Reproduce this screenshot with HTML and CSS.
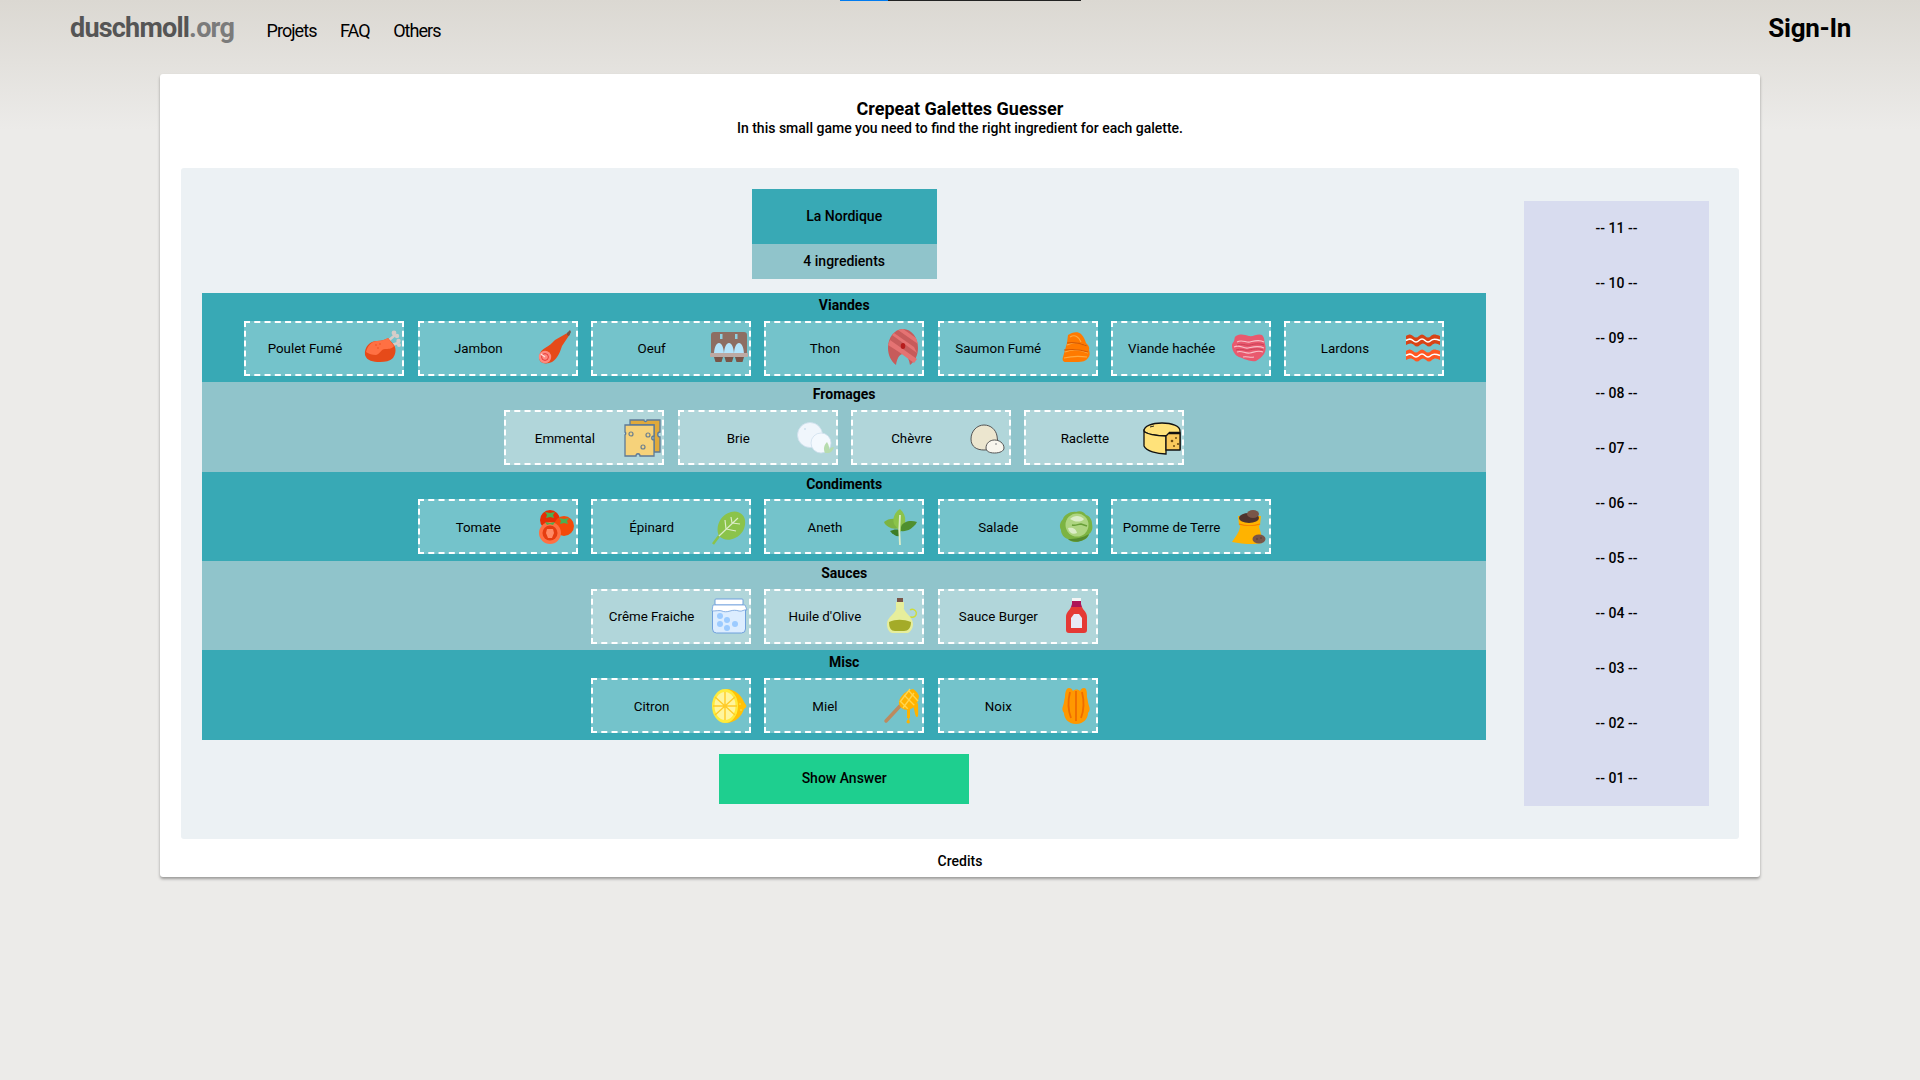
FILE: index.html
```html
<!DOCTYPE html>
<html lang="fr">
<head>
    <meta charset="UTF-8">
    <meta name="viewport" content="width=device-width, initial-scale=1.0">
    <title>Crepeat Galettes Guesser</title>
    <link rel="stylesheet" href="styles.css">
</head>
<body>

<div class="progress"><span class="progress-blue"></span><span class="progress-dark"></span></div>

<header class="topbar">
    <a class="logo" href="#">duschmoll<span>.org</span></a>
    <nav class="nav">
        <a href="#">Projets</a>
        <a href="#">FAQ</a>
        <a href="#">Others</a>
    </nav>
    <a class="signin" href="#">Sign-In</a>
</header>

<main class="card">
    <h1>Crepeat Galettes Guesser</h1>
    <p class="intro">In this small game you need to find the right ingredient for each galette.</p>

    <div class="panel">
        <div class="game">
            <div class="galette">
                <div class="galette-name">La Nordique</div>
                <div class="galette-count">4 ingredients</div>
            </div>

            <section class="group">
                <h2>Viandes</h2>
                <div class="items">
                    <div class="item"><span>Poulet Fumé</span>
                        <svg viewBox="0 0 40 40"><path d="M25 14l8-7M27 18l9-3" stroke="#d7ccc8" stroke-width="2.5"/><circle cx="32" cy="5" r="2.4" fill="#d7ccc8"/><circle cx="35" cy="8" r="2.200" fill="#d7ccc8"/><circle cx="36.500" cy="13" r="2.200" fill="#d7ccc8"/><circle cx="37" cy="17" r="2" fill="#d7ccc8"/><path d="M3 27c-1-8 5-14 12-14 4 0 8-1 11-3l6 7c3 5 1 10-1 13-3 3-8 4-13 4-7 0-13-1-15-7z" fill="#e64a19"/><path d="M4 24c2-7 6-11 11-11 4 0 8-1 11-3l6 8c-2 3-6 3-9 3-4 0-5 5-9 6-4 0-7-1-10-3z" fill="#ff7043"/><circle cx="14" cy="17" r=".7" fill="#e64a19"/><circle cx="18" cy="16" r=".7" fill="#e64a19"/><circle cx="16" cy="20" r=".7" fill="#e64a19"/></svg>
                    </div>
                    <div class="item"><span>Jambon</span>
                        <svg viewBox="0 0 40 40"><path d="M4 33c-2-5 0-10 5-13 4-2 7-5 10-8L33 4l1 2-8 12c-2 6-4 12-10 16-4 2-10 2-12-1z" fill="#e64a19"/><path d="M31 5l3-3 1 2-2 4-2-1z" fill="#795548"/><circle cx="9" cy="29" r="6.200" fill="#ff8a80"/><circle cx="9" cy="29" r="3.400" fill="none" stroke="#e53935" stroke-width="1"/><path d="M9 29l-4-3" stroke="#ffe0dc" stroke-width="1.200"/></svg>
                    </div>
                    <div class="item"><span>Oeuf</span>
                        <svg viewBox="0 0 40 40"><rect x="2" y="4" width="36" height="23" rx="3" fill="#8d6e63"/><rect x="11" y="6" width="2.500" height="5" fill="#90cfe0"/><rect x="26" y="6" width="2.500" height="5" fill="#90cfe0"/><path d="M5 27c0-7 2-12 5-12s5 5 5 12zM15 27c0-7 2-12 5-12s5 5 5 12zM25 27c0-7 2-12 5-12s5 5 5 12z" fill="#b3e5fc"/><rect x="1" y="25" width="38" height="4" rx="1" fill="#bcaaa4"/><path d="M5 29h9l-1.500 5h-6zM15.500 29h9l-1.500 5h-6zM26 29h9l-1.500 5h-6z" fill="#795548"/></svg>
                    </div>
                    <div class="item"><span>Thon</span>
                        <svg viewBox="0 0 40 40"><path d="M21 1C30 1 36 10 36 20c0 7-3 13-8 17-1-6-3-11-7-11s-6 5-7 11C9 33 6 27 6 20 6 10 12 1 21 1z" fill="#c75b5b"/><path d="M12 5l20 14 3 6-25-18zM8 12l27 19-3 4L17 24 6 17zM21 1l13 9 2 6L16 2z" fill="#e57373"/><ellipse cx="21" cy="18" rx="2.300" ry="3" fill="#b71c1c"/></svg>
                    </div>
                    <div class="item"><span>Saumon Fumé</span>
                        <svg viewBox="0 0 40 40"><path d="M12 7c4-3 10-4 13-1 3 3 4 6 5 9 2 2 4 4 3 7 1 3 1 6-1 8-2 3-6 4-10 4H10c-3 0-4-2-3-5l2-7 2-7z" fill="#ff7a00"/><path d="M14 9c5-3 9 0 11 5M11 17c6-3 14-2 20 1M9 24c7-3 16-2 23 1M8 30c8-2 16-2 23-1" fill="none" stroke="#ffab40" stroke-width="1.100"/><path d="M11 15c6-1 13 0 20 3M8 22c8-1 16-1 24 2" fill="none" stroke="#d85a00" stroke-width="1.100"/></svg>
                    </div>
                    <div class="item"><span>Viande hachée</span>
                        <svg viewBox="0 0 40 40"><path d="M7 8c5-3 9-1 13 0s9-3 13-1c3 3 2 6 3 9s1 7-1 10-5 5-8 7c-4 1-8-1-12-2-4-2-7-2-9-5s-3-5-3-8 1-3 2-5 0-4 2-5z" fill="#e9596e"/><path d="M8 14c5-3 9 1 13 0s9-3 14 0M5 19c6-3 9 2 14 1s10-3 16 0M8 24c5-2 8 2 13 1s8-3 13-1M14 29c4-1 7 1 11 0" fill="none" stroke="#f8c2ca" stroke-width="1.100"/><path d="M8 17c5-2 9 1 13 0s9-2 14 0M7 22c5-2 9 1 13 0s9-2 14 0" fill="none" stroke="#c2394f" stroke-width=".8"/></svg>
                    </div>
                    <div class="item"><span>Lardons</span>
                        <svg viewBox="0 0 40 40"><path d="M4 8c3-2 5-2 7 0s4 2 6 0 4-2 6 0 4 2 6 0 4-2 9 0v9c-3-2-6-2-8 0s-4 2-6 0-4-2-6 0-4 2-6 0-5-2-8 0z" fill="#d84315"/><path d="M4 12.500c3-2 5-2 7 0s4 2 6 0 4-2 6 0 4 2 6 0 4-2 9 0" fill="none" stroke="#fff" stroke-width="1.600"/><path d="M4 23c3-2 5-2 7 0s4 2 6 0 4-2 6 0 4 2 6 0 4-2 9 0v9c-3-2-6-2-8 0s-4 2-6 0-4-2-6 0-4 2-6 0-5-2-8 0z" fill="#ff5722"/><path d="M4 27.500c3-2 5-2 7 0s4 2 6 0 4-2 6 0 4 2 6 0 4-2 9 0" fill="none" stroke="#fff" stroke-width="1.600"/></svg>
                    </div>
                </div>
            </section>

            <section class="group">
                <h2>Fromages</h2>
                <div class="items">
                    <div class="item"><span>Emmental</span>
                        <svg viewBox="0 0 40 40"><path d="M8 2h14c0 2 3 2 3 0h13v12c-3 0-3 5 0 5v15h-6V7H8z" fill="#e0a93a" stroke="#5d7a97" stroke-width="1.300"/><path d="M3 7h29v11c-3 0-3 4 0 4v16H18c0-3-4-3-4 0H3V17c1 0 1-3 0-3z" fill="#f6d27a" stroke="#5d7a97" stroke-width="1.300"/><circle cx="9" cy="16" r="2" fill="none" stroke="#6b7f8f" stroke-width="1.200"/><circle cx="26" cy="17" r="2" fill="none" stroke="#6b7f8f" stroke-width="1.200"/><circle cx="21" cy="29" r="2" fill="none" stroke="#6b7f8f" stroke-width="1.200"/></svg>
                    </div>
                    <div class="item"><span>Brie</span>
                        <svg viewBox="0 0 40 40"><circle cx="14" cy="17" r="12.500" fill="#f0f6fc" stroke="#cfe0ee" stroke-width=".8"/><circle cx="25" cy="25" r="10" fill="#f4f9fe" stroke="#cfe0ee" stroke-width=".8"/><circle cx="9" cy="11" r="1" fill="#cfe0ee"/><path d="M29 35c-2-4-1-8 2-11 2 3 3 7 2 11z" fill="#b7dcae"/><path d="M32 35c0-3 3-6 6-6-1 3-3 6-6 6z" fill="#b7dcae"/></svg>
                    </div>
                    <div class="item"><span>Chèvre</span>
                        <svg viewBox="0 0 40 40"><path d="M2 21C2 13 8 7 15 7s12 5 13 11l1 8c-2 4-8 6-14 6C8 32 2 29 2 21z" fill="#ece6cf" stroke="#555" stroke-width="1"/><path d="M17 30c0-5 4-8 8.500-8S35 25 35 30c0 3-4 5-9.500 5S17 33 17 30z" fill="#f8f6ee" stroke="#555" stroke-width="1"/><circle cx="27" cy="26" r="1" fill="#aaa"/></svg>
                    </div>
                    <div class="item"><span>Raclette</span>
                        <svg viewBox="0 0 40 40"><path d="M2 13c0-5 8-8 18-8s18 3 18 8v18H26V18C14 18 4 16 2 13z" fill="#ffe27a" stroke="#111" stroke-width="1.300"/><path d="M2 13v15c2 5 13 8 22 8V18C14 18 4 16 2 13z" fill="#ffe27a" stroke="#111" stroke-width="1.300"/><path d="M24 18l3-3h11v17H24z" fill="#f9c95c" stroke="#111" stroke-width="1.300"/><path d="M27 15h11" stroke="#111" stroke-width="2.500"/><path d="M8 9l4-1" stroke="#111" stroke-width=".9"/><circle cx="30" cy="23" r="1.300" fill="#6d4c12"/><circle cx="34" cy="20" r="1" fill="#6d4c12"/><circle cx="36" cy="26" r="1.100" fill="#6d4c12"/><circle cx="32" cy="28" r="1" fill="#6d4c12"/></svg>
                    </div>
                </div>
            </section>

            <section class="group">
                <h2>Condiments</h2>
                <div class="items">
                    <div class="item"><span>Tomate</span>
                        <svg viewBox="0 0 40 40"><circle cx="14" cy="13" r="10" fill="#e62e04"/><circle cx="28" cy="19" r="10" fill="#f44a0a"/><path d="M9 5l5 1 5-1-2 3 1 3-4-1-4 1 1-3zM23 11l5 1 5-1-2 3 1 3-4-1-4 1 1-3z" fill="#4caf50"/><circle cx="14" cy="26" r="11" fill="#ff7043"/><circle cx="14" cy="26" r="7.500" fill="#e53d10"/><path d="M11 22h6l1 4-2 5h-4l-2-5z" fill="#ff8a65"/><path d="M9 15l5 1 5-1-2 3-3-1-3 1z" fill="#4caf50"/></svg>
                    </div>
                    <div class="item"><span>Épinard</span>
                        <svg viewBox="0 0 40 40"><path d="M10 29C6 20 11 8 22 5c7-2 13 2 14 8 1 8-3 15-10 18-6 3-12 2-16-2z" fill="#8bc34a"/><path d="M4 37l6-8" stroke="#8bc34a" stroke-width="2.500"/><path d="M10 29L29 11M17 22l-1-9M17 22l10 2M23 16l-1-6M23 16l8 1" fill="none" stroke="#dcedc8" stroke-width="1.200"/></svg>
                    </div>
                    <div class="item"><span>Aneth</span>
                        <svg viewBox="0 0 40 40"><path d="M15 12c-5-1-10 0-13 3 2 5 9 8 15 6z" fill="#7cb342"/><path d="M18 2c-5 3-8 9-6 15l6 8c6-6 8-16 0-23z" fill="#8bc34a"/><path d="M19 24c5 1 12-2 16-9-6-2-14-1-16 5z" fill="#4f8f2e"/><path d="M8 24c3 4 7 6 10 5l-1-6c-3-1-6 0-9 1z" fill="#3d7d25"/><path d="M18 8c-1 10-1 20 0 30" fill="none" stroke="#dcedc8" stroke-width="1.800"/></svg>
                    </div>
                    <div class="item"><span>Salade</span>
                        <svg viewBox="0 0 40 40"><path d="M20 5c4-2 8 0 10 3 4 1 6 5 6 9 1 4 0 8-3 10-1 4-5 7-10 7-3 2-8 1-11-2-4-1-7-5-7-9-2-4-1-8 2-11 1-4 8-8 13-7z" fill="#7cb342"/><path d="M12 32c3 3 11 4 15 1 3-1 5-3 6-6-6 4-14 5-21 5z" fill="#558b2f"/><circle cx="21" cy="18" r="11.500" fill="#aed581"/><path d="M14 12c4-4 10-4 14 0-2 3-7 3-10 2zM12 21c4-1 8 0 9 5-4 2-8 0-9-5z" fill="#dcedc8"/><path d="M16 18c4 1 6-1 9-1l6 2" fill="none" stroke="#689f38" stroke-width="1.500"/></svg>
                    </div>
                    <div class="item"><span>Pomme de Terre</span>
                        <svg viewBox="0 0 40 40"><path d="M10 13h21l-1 7c2 6 3 11 3 16-8 2-20 1-30-1 3-5 7-9 8-15z" fill="#ffb300"/><path d="M9 9h23l-1 9c-7 3-15 2-21 0z" fill="#ffb300"/><path d="M10 17c6 2 15 2 21 0" fill="none" stroke="#f57c00" stroke-width="1.200"/><ellipse cx="20" cy="11" rx="10" ry="5" fill="#4e342e"/><ellipse cx="24" cy="7" rx="6" ry="4" fill="#795548"/><ellipse cx="30" cy="32" rx="6.500" ry="4.500" fill="#795548"/><circle cx="28" cy="32" r=".7" fill="#4e342e"/><circle cx="32" cy="31" r=".7" fill="#4e342e"/></svg>
                    </div>
                </div>
            </section>

            <section class="group">
                <h2>Sauces</h2>
                <div class="items">
                    <div class="item"><span>Crême Fraiche</span>
                        <svg viewBox="0 0 40 40"><rect x="3.500" y="10" width="33" height="27" rx="4" fill="#dcedff" stroke="#6fa0dc" stroke-width="1"/><circle cx="11" cy="20" r="3" fill="#9ccbff"/><circle cx="18" cy="24" r="3" fill="#9ccbff"/><circle cx="11" cy="28" r="3" fill="#9ccbff"/><circle cx="18" cy="32" r="3" fill="#9ccbff"/><circle cx="26" cy="28" r="3" fill="#9ccbff"/><rect x="6" y="3" width="28" height="6" rx="1" fill="#fff" stroke="#6fa0dc" stroke-width="1"/><path d="M4 9h32l2 5c-3-1-5 2-8 1s-6-1-9 0-6 1-8 0-6 0-10 0z" fill="#fff" stroke="#6fa0dc" stroke-width=".8"/></svg>
                    </div>
                    <div class="item"><span>Huile d'Olive</span>
                        <svg viewBox="0 0 40 40"><rect x="15" y="2" width="6" height="4" fill="#795548"/><path d="M14 6h8v6l-1 3H15l-1-3z" fill="#e6ee9c"/><path d="M28 14a4 4 0 1 1 1 7l-3 1" fill="none" stroke="#cddc39" stroke-width="1.400"/><path d="M14 13h8c1 4 9 8 9 15 0 5-3 8-5 9H10c-3-1-5-4-5-9 0-7 9-11 9-15z" fill="#e6ee9c"/><path d="M7 26c7-3 14-3 22 0 0 6-3 9-7 9H13c-4 0-6-3-6-9z" fill="#a4ab28"/></svg>
                    </div>
                    <div class="item"><span>Sauce Burger</span>
                        <svg viewBox="0 0 40 40"><rect x="16" y="2" width="9" height="3" fill="#f5f5f5"/><path d="M16 5h9v3l1 3H15l1-3z" fill="#ad1457"/><path d="M15 11h11c1 3 5 5 5 10v13c0 2-1 3-3 3H13c-2 0-3-1-3-3V21c0-5 4-7 5-10z" fill="#e53935"/><path d="M18 18h5l3 4v10H15V22z" fill="#e8eaf6"/></svg>
                    </div>
                </div>
            </section>

            <section class="group">
                <h2>Misc</h2>
                <div class="items">
                    <div class="item"><span>Citron</span>
                        <svg viewBox="0 0 40 40"><path d="M17 3c9 0 16 7 18 13l2 3c1 1 0 3-2 4-2 7-9 14-18 14z" fill="#ffc107"/><ellipse cx="16" cy="20" rx="13" ry="17" fill="#ffeb3b"/><ellipse cx="16" cy="20" rx="10.500" ry="14" fill="#fff59d"/><path d="M16 6v28M6 11l20 18M26 11L6 29M4 20h24" stroke="#ffca28" stroke-width="1.400"/><circle cx="31" cy="18" r=".7" fill="#fff176"/><circle cx="32" cy="24" r=".7" fill="#fff176"/></svg>
                    </div>
                    <div class="item"><span>Miel</span>
                        <svg viewBox="0 0 40 40"><path d="M4 35l14-15" stroke="#bc8a5f" stroke-width="3.500" stroke-linecap="round"/><path d="M17 18c-1-5 5-13 14-15 3 2 5 4 6 7-1 8-5 13-12 14-4 0-7-3-8-6z" fill="#ffb300"/><path d="M22 9l11 11M27 5l9 10M18 15l8 8M21 22l11-15M18 16L28 3" fill="none" stroke="#ffd54f" stroke-width="1.300"/><path d="M31 20c2 5 2 11 4 11s1-8 1-14zM25 23v9l2 1 1-2v-9z" fill="#ffb300"/><path d="M26.500 33c1 2 2 3 1 4s-3 0-3-1 1-2 2-3z" fill="#ffb300"/></svg>
                    </div>
                    <div class="item"><span>Noix</span>
                        <svg viewBox="0 0 40 40"><path d="M13 2c2 0 3 1 4 3 2-2 5-2 7 0 1-2 2-3 4-3 3 0 3 5 3 9 1 4 1 6 2 9 1 2 1 5-1 7 0 5-4 11-12 11S8 32 8 27c-2-2-2-5-1-7 1-3 1-5 2-9 0-4 1-9 4-9z" fill="#ff9800"/><path d="M14 6c-2 8-2 18 1 26M20 5v30M26 6c2 8 2 18-1 26" fill="none" stroke="#ef6c00" stroke-width="1.800"/></svg>
                    </div>
                </div>
            </section>

            <button class="answer" type="button">Show Answer</button>
        </div>

        <ol class="slots">
            <li>-- 11 --</li>
            <li>-- 10 --</li>
            <li>-- 09 --</li>
            <li>-- 08 --</li>
            <li>-- 07 --</li>
            <li>-- 06 --</li>
            <li>-- 05 --</li>
            <li>-- 04 --</li>
            <li>-- 03 --</li>
            <li>-- 02 --</li>
            <li>-- 01 --</li>
        </ol>
    </div>

    <div class="credits">Credits</div>
</main>

</body>
</html>
```

FILE: styles.css
```css
body {
    font-family: Roboto, "Liberation Sans", sans-serif;
    background: #ecebe9 linear-gradient(#dbd8d2, #ecebe9 130px) no-repeat;
    color: #000;
    margin: 0;
    min-height: 1080px;
}
a {
    color: inherit;
    text-decoration: none;
}

.progress {
    position: absolute;
    top: 0;
    left: 840px;
    display: flex;
    height: 1px;
}
.progress-blue {
    width: 48px;
    background-color: #007bf0;
}
.progress-dark {
    width: 193px;
    background-color: #222;
}

.topbar {
    display: flex;
    align-items: center;
    height: 74px;
    box-sizing: border-box;
    padding: 0 69px 16px 70px;
}
.logo {
    font-size: 27px;
    font-weight: 700;
    letter-spacing: -0.8px;
    color: #555;
    margin-right: 32.5px;
    padding-bottom: 3px;
}
.logo span {
    color: #7b7b7b;
}
.nav {
    display: flex;
    gap: 23.5px;
    font-size: 18px;
    letter-spacing: -0.95px;
    padding-top: 3px;
}
.signin {
    margin-left: auto;
    font-size: 26px;
    font-weight: 700;
    letter-spacing: -0.3px;
    padding-bottom: 2px;
}

.card {
    width: 1600px;
    height: 803px;
    box-sizing: border-box;
    margin-left: 160px;
    padding: 24px 21px 0;
    background-color: #fff;
    border-radius: 3px;
    box-shadow: 0 2px 3px rgba(0, 0, 0, 0.35);
}
h1 {
    margin: 0;
    font-size: 18px;
    line-height: 21px;
    font-weight: 700;
    text-align: center;
}
.intro {
    margin: 0 0 32px;
    padding-top: 1px;
    height: 16px;
    font-size: 14px;
    line-height: 17px;
    font-weight: 500;
    text-align: center;
}

.panel {
    display: flex;
    height: 671px;
    box-sizing: border-box;
    padding: 21px 30px 0 21px;
    background-color: #ecf1f4;
    border-radius: 3px;
}
.game {
    width: 1284.4px;
    margin-right: 37.6px;
}

.galette {
    width: 185px;
    margin: 0 auto 13.9px;
    font-size: 14px;
    font-weight: 500;
    text-align: center;
}
.galette-name {
    height: 55px;
    line-height: 55px;
    background-color: #38a9b5;
}
.galette-count {
    height: 35px;
    line-height: 35px;
    background-color: #90c4cb;
}

.group {
    height: 89.33px;
    background-color: #38a9b5;
}
.group:nth-of-type(even) {
    background-color: #90c4cb;
}
h2 {
    margin: 0;
    height: 27.9px;
    font-size: 14px;
    line-height: 24px;
    font-weight: 700;
    text-align: center;
}
.items {
    display: flex;
    justify-content: center;
    gap: 13.33px;
}
.item {
    display: flex;
    align-items: center;
    width: 160px;
    height: 55px;
    box-sizing: border-box;
    border: 2px dashed #fff;
    background-color: rgba(255, 255, 255, 0.3);
    font-size: 13.33px;
}
.item span {
    flex: 1;
    padding: 1.1px 0 0 1.5px;
    text-align: center;
}
.item svg {
    width: 40px;
    height: 40px;
    flex: none;
}

.answer {
    display: block;
    width: 250px;
    height: 50px;
    margin: 14px auto 0;
    padding: 0 0 2px;
    border: none;
    background-color: #1ecf8f;
    color: #000;
    font-family: inherit;
    font-size: 14px;
    font-weight: 500;
}

.slots {
    width: 185px;
    height: 605px;
    margin: 12px 0 0;
    padding: 0;
    list-style: none;
    background-color: #d8dcef;
    font-size: 14px;
    font-weight: 500;
    text-align: center;
}
.slots li {
    height: 55px;
    line-height: 55px;
}

.credits {
    margin-top: 14px;
    font-size: 14px;
    line-height: 17px;
    font-weight: 500;
    text-align: center;
}
```
